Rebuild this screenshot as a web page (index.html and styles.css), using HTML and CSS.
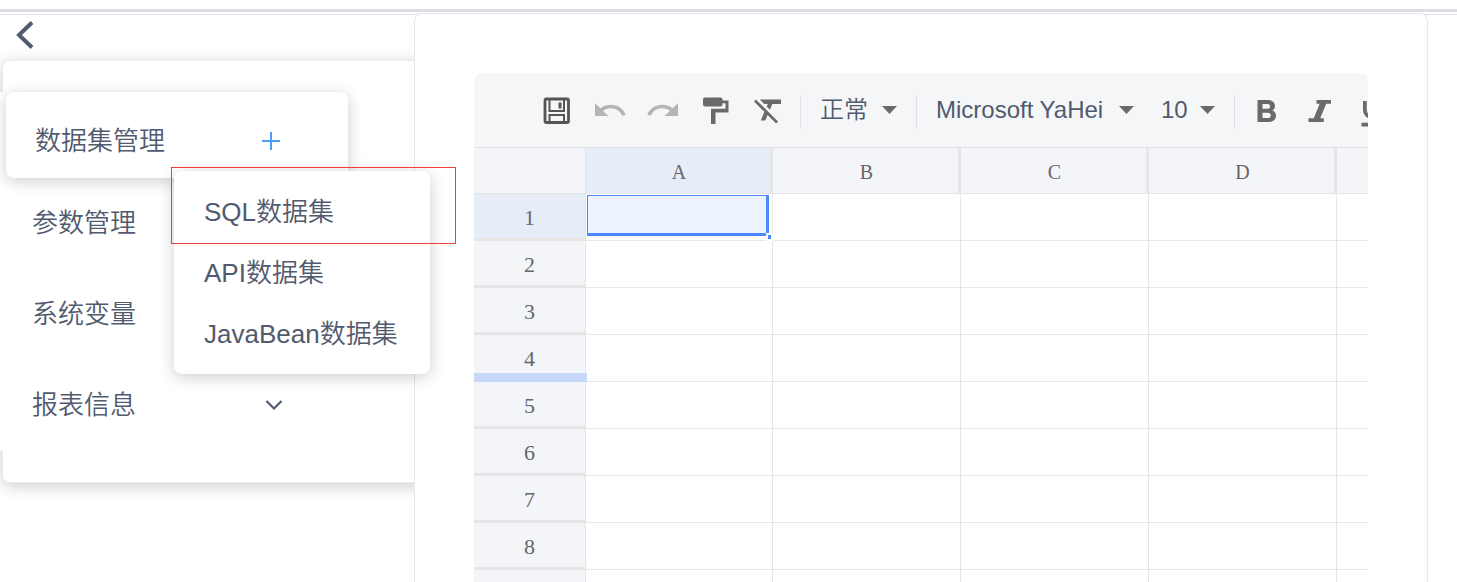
FILE: index.html
```html
<!DOCTYPE html>
<html lang="zh-CN">
<head>
  <meta charset="UTF-8">
  <title>报表设计</title>
  <link rel="stylesheet" href="styles.css">
</head>
<body>

<div class="top-bar"></div>

<main class="designer">
  <aside class="sidebar">
    <button class="back" aria-label="返回">
      <svg width="18" height="28" viewBox="0 0 18 28"><path d="M16 1.500L3 14l13 12.500" fill="none" stroke="#515a6e" stroke-width="4"/></svg>
    </button>

    <div class="side-card">
      <div class="side-list">
        <div class="side-row active">
          <span>数据集管理</span>
          <button class="icon-btn" aria-label="添加数据集">
            <svg width="18" height="18" viewBox="0 0 18 18"><path d="M9 0v18M0 9h18" stroke="#4f9bfa" stroke-width="2"/></svg>
          </button>
          <div class="menu">
            <button>SQL数据集</button>
            <button>API数据集</button>
            <button>JavaBean数据集</button>
            <div class="marker"></div>
          </div>
        </div>
        <div class="side-row"><span>参数管理</span></div>
        <div class="side-row"><span>系统变量</span></div>
        <div class="side-row">
          <span>报表信息</span>
          <button class="icon-btn" aria-label="展开">
            <svg width="18" height="12" viewBox="0 0 18 12"><path d="M1.500 2L9 9.500l7.500-7.500" fill="none" stroke="#515a6e" stroke-width="2.200"/></svg>
          </button>
        </div>
      </div>
    </div>
  </aside>

  <section class="workspace">
    <div class="sheet">
      <div class="toolbar">
        <button class="tool" aria-label="保存">
          <svg class="outline" viewBox="0 0 36 36"><rect x="6" y="7" width="23.500" height="23.500" rx="1.500" stroke-width="2.800"/><path d="M10.500 7.500v11.500h14.500v-11.500M10.500 30v-7h14.500v7"/><path d="M21 10.500v6" stroke-width="3"/></svg>
        </button>
        <button class="tool disabled" aria-label="撤销">
          <svg viewBox="0 0 24 24"><path d="M12.500 8.500c-2.650 0-5.050.8-6.900 2.300L2 7.500V16h9l-3.620-3.400c1.390-1.100 3.160-1.700 5.120-1.700 3.540 0 6.550 2 7.600 5l2.370-.78C21.080 11.200 17.150 8.500 12.500 8.500z"/></svg>
        </button>
        <button class="tool disabled" aria-label="重做">
          <svg viewBox="0 0 24 24"><path d="M18.400 10.800C16.550 9.300 14.150 8.500 11.500 8.500c-4.650 0-8.580 2.700-9.960 6.620L3.900 15.900c1.050-3 4.050-5 7.600-5 1.950 0 3.730.6 5.120 1.700L13 16h9V7.500l-3.600 3.300z"/></svg>
        </button>
        <button class="tool" aria-label="格式刷">
          <svg viewBox="0 0 36 36"><rect x="5" y="5.500" width="19.500" height="9" rx="2"/><path d="M24 8.500h6.500v12h-13v11.500h-4.500v-15.200h14.500v-5.600H24z"/></svg>
        </button>
        <button class="tool" aria-label="清除格式">
          <svg viewBox="0 0 24 24"><path d="M3.270 5L2 6.270l6.970 6.970L6.500 19h3l1.570-3.660L16.730 21 18 19.730 3.550 5.270 3.270 5zM6 5v.18L8.820 8h2.400l-.72 1.680 2.100 2.100L14.210 8H20V5H6z"/></svg>
        </button>
        <span class="divider"></span>
        <select class="picker format" aria-label="格式"><option>正常</option></select>
        <span class="divider"></span>
        <select class="picker font" aria-label="字体"><option>Microsoft YaHei</option></select>
        <select class="picker size" aria-label="字号"><option>10</option></select>
        <span class="divider"></span>
        <button class="tool" aria-label="加粗">
          <svg viewBox="0 0 36 36"><path fill-rule="evenodd" d="M9.500 8h10.500c4 0 7 2.300 7 6 0 2-1 3.700-2.600 4.600 2.300.9 3.600 2.900 3.600 5.200 0 3.900-3 6.200-7 6.200H9.500zM14.500 12v4.800h5c1.600 0 2.600-1 2.600-2.400s-1-2.400-2.600-2.400zM14.500 20.800v5.200h5.600c1.700 0 2.700-1.100 2.700-2.600s-1-2.600-2.700-2.600z"/></svg>
        </button>
        <button class="tool" aria-label="斜体">
          <svg viewBox="0 0 36 36"><path d="M15.500 8H30v3.700h-4.800l-6 14.600h3.600V30H7.500v-3.700h5.200l6-14.600h-3.200z"/></svg>
        </button>
        <button class="tool" aria-label="下划线">
          <svg viewBox="0 0 24 24"><path d="M12 18c3.310 0 6-2.690 6-6V6h-2.500v6c0 1.930-1.570 3.500-3.500 3.500S8.500 13.930 8.500 12V6H6v6c0 3.310 2.690 6 6 6zM5 20.500v2.500h14v-2.500H5z"/></svg>
        </button>
      </div>

      <table class="grid">
        <colgroup>
          <col class="col-index"><col class="col-first"><col class="col"><col class="col"><col class="col"><col>
        </colgroup>
        <thead>
          <tr><th></th><th class="on">A</th><th>B</th><th>C</th><th>D</th><th></th></tr>
        </thead>
        <tbody>
          <tr><th class="on">1</th><td><div class="selection"></div></td><td></td><td></td><td></td><td></td></tr>
          <tr><th>2</th><td></td><td></td><td></td><td></td><td></td></tr>
          <tr><th>3</th><td></td><td></td><td></td><td></td><td></td></tr>
          <tr><th>4<div class="resizer"></div></th><td></td><td></td><td></td><td></td><td></td></tr>
          <tr><th>5</th><td></td><td></td><td></td><td></td><td></td></tr>
          <tr><th>6</th><td></td><td></td><td></td><td></td><td></td></tr>
          <tr><th>7</th><td></td><td></td><td></td><td></td><td></td></tr>
          <tr><th>8</th><td></td><td></td><td></td><td></td><td></td></tr>
          <tr><th></th><td></td><td></td><td></td><td></td><td></td></tr>
        </tbody>
      </table>
    </div>
  </section>
</main>

</body>
</html>
```
FILE: styles.css
```css
* {
  box-sizing: border-box;
}
body {
  margin: 0;
  height: 100vh;
  overflow: hidden;
  display: flex;
  flex-direction: column;
  background: #fff;
  color: #515a6e;
  font-family: "Liberation Sans", "Noto Sans CJK SC", sans-serif;
  font-size: 26px;
  font-weight: 350;
}
button {
  padding: 0;
  border: none;
  background: none;
  color: inherit;
  font: inherit;
  cursor: pointer;
}
svg {
  display: block;
}
.top-bar {
  flex: none;
  height: 12px;
  margin-bottom: 2px;
  border-bottom: 3px solid #dadde2;
}
.designer {
  flex: 1;
  min-height: 0;
  display: flex;
  border-top: 1px solid #dcdfe6;
}

/* sidebar */
.sidebar {
  flex: none;
  width: 414px;
}
.back {
  display: flex;
  align-items: center;
  height: 45px;
  padding: 0 16px 5px;
}
.side-card {
  margin: 0 -20px 0 2px;
  padding: 31px 0;
  border: 1px solid #ebebeb;
  border-radius: 8px;
  box-shadow: 0 3px 16px rgba(0, 0, 0, 0.2);
}
.side-list {
  margin-left: -3px;
  background: #fff;
}
.side-row {
  display: flex;
  align-items: center;
  justify-content: space-between;
  width: 348px;
  height: 91px;
  padding: 0 65px 2px 32px;
  line-height: 36px;
}
.side-row.active {
  position: relative;
  width: 342px;
  height: 86px;
  margin-left: 6px;
  padding: 12px 68px 0 29px;
  border-radius: 8px;
  background: #fff;
  box-shadow: 0 3px 16px rgba(0, 0, 0, 0.2);
  z-index: 3;
}
.menu {
  position: absolute;
  left: 168px;
  top: 79px;
  width: 256px;
  padding: 10px 0;
  border-radius: 8px;
  background: #fff;
  box-shadow: 0 3px 16px rgba(0, 0, 0, 0.2);
}
.menu button {
  display: block;
  width: 100%;
  height: 61px;
  padding-left: 30px;
  text-align: left;
  white-space: nowrap;
}
.marker {
  position: absolute;
  left: -3px;
  top: -4px;
  width: 285px;
  height: 77px;
  border: 1px solid #f03e3e;
  pointer-events: none;
}

/* workspace */
.workspace {
  position: relative;
  flex: 1;
  min-width: 0;
  margin: -2px 29px 0 0;
  padding: 59px 59px 0;
  border: 1px solid #e6e8eb;
  border-bottom: none;
  border-radius: 8px 8px 0 0;
  background: #fff;
}
.sheet {
  height: 100%;
  overflow: hidden;
  border-radius: 8px 8px 0 0;
}
.toolbar {
  display: flex;
  align-items: center;
  height: 75px;
  padding-left: 56px;
  border-bottom: 1px solid #e0e2e4;
  background: #f5f6f7;
}
.tool {
  flex: none;
  display: flex;
  justify-content: center;
  width: 53px;
}
.tool svg {
  width: 36px;
  height: 36px;
  fill: #6a6a6a;
}
.tool.disabled svg {
  fill: #b4b5b6;
}
.tool .outline {
  fill: none;
  stroke: #555;
  stroke-width: 2;
}
.divider {
  flex: none;
  width: 1px;
  height: 34px;
  margin: 3px 4px 0 5px;
  background: #dfe1e4;
}
.picker {
  flex: none;
  height: 36px;
  margin: 0 14px 0 15px;
  padding: 0 0 2px;
  border: none;
  appearance: none;
  background: url("data:image/svg+xml,%3Csvg xmlns='http://www.w3.org/2000/svg' width='15' height='8'%3E%3Cpath d='M0 0h15L7.500 8z' fill='%236a6a6a'/%3E%3C/svg%3E") no-repeat right center;
  color: #515a6e;
  font: inherit;
  font-size: 24px;
}
.format {
  width: 77px;
}
.font {
  width: 198px;
  margin-right: 12px;
}
.size {
  width: 54px;
}

/* spreadsheet */
.grid {
  width: 100%;
  table-layout: fixed;
  border-collapse: separate;
  border-spacing: 0;
}
.col-index {
  width: 112px;
}
.col-first {
  width: 187px;
}
.col {
  width: 188px;
}
.grid th,
.grid td {
  position: relative;
  height: 47px;
  padding: 0;
  border-right: 1px solid #e6e6e6;
  border-bottom: 1px solid #e8e8e8;
}
.grid th {
  padding-top: 3px;
  border-bottom: 3px solid #e6e6e6;
  background: #f4f5f8;
  color: #666;
  font-family: "Liberation Serif", serif;
  font-size: 22px;
  font-weight: 400;
}
.grid thead th {
  height: 46px;
  padding: 3px 0 0 2px;
  border-right-width: 3px;
  border-bottom-width: 1px;
  font-size: 20px;
}
.grid thead th:first-child {
  border-right-width: 1px;
}
.grid th:last-child,
.grid td:last-child {
  border-right: none;
}
.grid th.on {
  background: #e6ecf8;
}
.selection {
  position: absolute;
  inset: 1px 3px 4px 1px;
  border: 1px solid #4b89ff;
  border-right-width: 3px;
  border-bottom-width: 3px;
  background: #ecf2fe;
}
.selection::after {
  content: "";
  position: absolute;
  right: -7px;
  bottom: -8px;
  width: 3px;
  height: 4px;
  border: 2px solid #fff;
  background: #4b89ff;
}
.resizer {
  position: absolute;
  left: 0;
  right: -2px;
  bottom: -3px;
  height: 9px;
  background: #c8d8f8;
  z-index: 1;
}
```
